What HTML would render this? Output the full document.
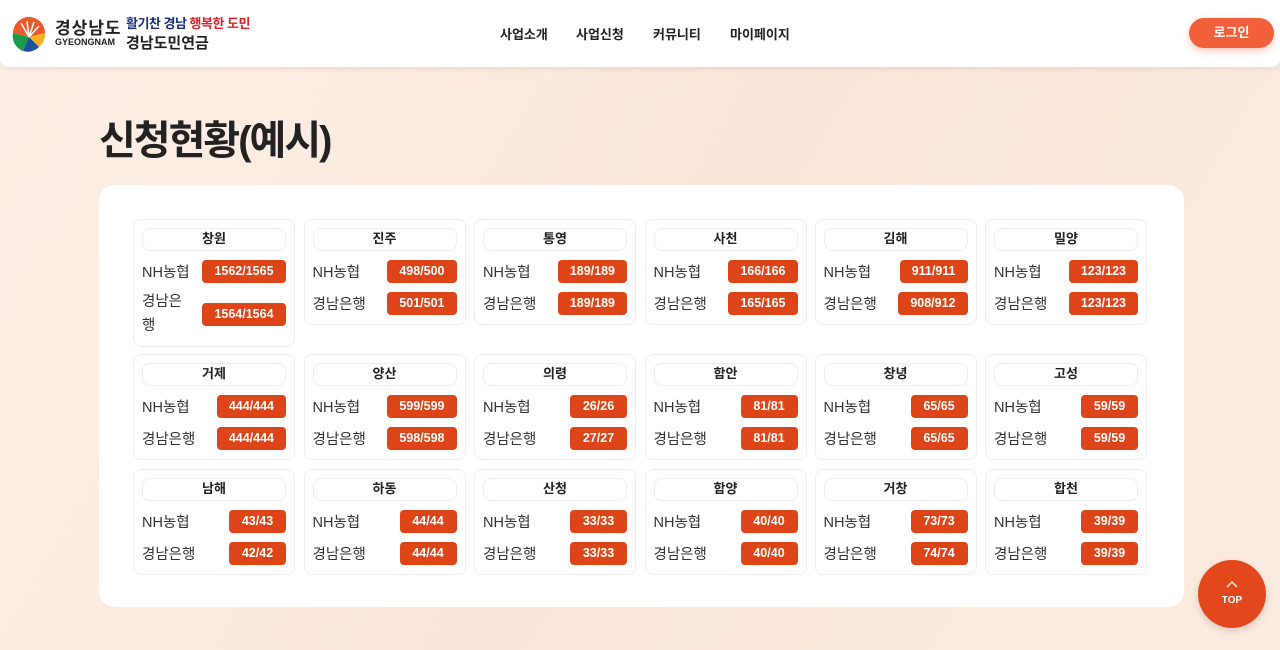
<!DOCTYPE html>
<html><head><meta charset="utf-8"><style>
*{margin:0;padding:0;box-sizing:border-box}
body{width:1280px;height:650px;overflow:hidden;font-family:"Liberation Sans","Noto Sans CJK KR",sans-serif;background:linear-gradient(120deg,#fdefe6 0%,#fbe7da 50%,#fcebe0 100%);position:relative;color:#222}
header{position:absolute;left:0;top:0;width:1280px;height:67px;background:#fff;box-shadow:0 2px 6px rgba(0,0,0,.08);border-radius:0 0 8px 8px}
.nav{position:absolute;top:24px;font-size:13px;font-weight:bold;color:#222}
.login{position:absolute;left:1189px;top:18px;width:85px;height:30px;border-radius:15px;background:#f15f3b;color:#fff;font-size:13px;font-weight:bold;text-align:center;line-height:30px;box-shadow:0 3px 8px rgba(240,95,59,.35)}
h1{position:absolute;left:99px;top:108px;font-size:40px;font-weight:bold;color:#222;letter-spacing:-2px}
.panel{position:absolute;left:99px;top:185px;width:1085px;height:422px;background:#fff;border-radius:16px}
.card{position:absolute;width:162px;border:1.5px solid #eee;border-radius:8px;background:#fff;padding:8px 8px 5px}
.t{height:23px;border:1.5px solid #eee;border-radius:8px;text-align:center;font-size:13px;font-weight:bold;line-height:20px}
.r{display:flex;justify-content:space-between;align-items:center;height:32px;font-size:14.5px;color:#333}
.b{background:#dd4418;color:#fff;font-size:12.5px;font-weight:bold;height:23px;line-height:23px;border-radius:4px;padding:0 12px;min-width:57px;text-align:center}
.top{position:absolute;left:1198px;top:560px;width:68px;height:68px;border-radius:50%;background:#e2481b;color:#fff;text-align:center;font-size:10px;font-weight:bold;box-shadow:0 3px 8px rgba(0,0,0,.15)}
</style></head><body>
<header>
<svg style="position:absolute;left:9px;top:13px" width="40" height="40" viewBox="0 0 40 40">
<path d="M4 20 A16 16 0 0 1 36 20 L20 24Z" fill="#ea5a2c"/>
<path d="M4 20 L20 24 L14 38 A16 16 0 0 1 4 20Z" fill="#1a9a4a"/>
<path d="M20 24 L36 20 A16 16 0 0 1 30 34Z" fill="#f6b21a"/>
<path d="M20 24 L30 34 A16 16 0 0 1 14 38Z" fill="#1f4fa0"/>
<path d="M20 24 L12 10 M20 24 L18 8 M20 24 L25 9 M20 24 L30 13" stroke="#fff" stroke-width="1.5"/>
</svg>
<div style="position:absolute;left:55px;top:14px;font-size:17px;font-weight:bold;color:#222;letter-spacing:1px">경상남도</div>
<div style="position:absolute;left:55px;top:37px;font-size:9px;font-weight:bold;color:#222">GYEONGNAM</div>
<div style="position:absolute;left:126px;top:13px;font-size:13px;font-weight:bold;color:#1c2f7a;letter-spacing:-.5px">활기찬 경남 <span style="color:#e0202a">행복한 도민</span></div>
<div style="position:absolute;left:126px;top:32px;font-size:15px;font-weight:bold;color:#222">경남도민연금</div>
<div class="nav" style="left:500px">사업소개</div>
<div class="nav" style="left:576px">사업신청</div>
<div class="nav" style="left:653px">커뮤니티</div>
<div class="nav" style="left:730px">마이페이지</div>
<div class="login">로그인</div>
</header>
<h1>신청현황(예시)</h1>
<div class="panel"></div>
<div id="c"></div>
<div class="top"><svg style="margin-top:20px" width="12" height="8" viewBox="0 0 12 8"><path d="M1 7 L6 2 L11 7" stroke="#fff" stroke-width="1.3" fill="none"/></svg><div style="margin-top:4px">TOP</div></div>
<script>
var d=[["창원","1562/1565","1564/1564"],["진주","498/500","501/501"],["통영","189/189","189/189"],["사천","166/166","165/165"],["김해","911/911","908/912"],["밀양","123/123","123/123"],
["거제","444/444","444/444"],["양산","599/599","598/598"],["의령","26/26","27/27"],["함안","81/81","81/81"],["창녕","65/65","65/65"],["고성","59/59","59/59"],
["남해","43/43","42/42"],["하동","44/44","44/44"],["산청","33/33","33/33"],["함양","40/40","40/40"],["거창","73/73","74/74"],["합천","39/39","39/39"]];
var xs=[133,303.5,474,644.5,814.5,985],ys=[219,354,469],h="";
d.forEach(function(e,i){var x=xs[i%6],y=ys[Math.floor(i/6)];
var lab2=i==0?'<span style="line-height:24px">경남은<br>행</span>':'경남은행';
h+='<div class="card" style="left:'+x+'px;top:'+y+'px"><div class="t">'+e[0]+'</div><div class="r" style="margin-top:4px"><span>NH농협</span><span class="b"'+(i==0?' style="min-width:84px"':'')+'>'+e[1]+'</span></div><div class="r"'+(i==0?' style="height:54px"':'')+'><span>'+lab2+'</span><span class="b"'+(i==0?' style="min-width:84px"':'')+'>'+e[2]+'</span></div></div>';});
document.getElementById("c").innerHTML=h;
</script>
</body></html>
